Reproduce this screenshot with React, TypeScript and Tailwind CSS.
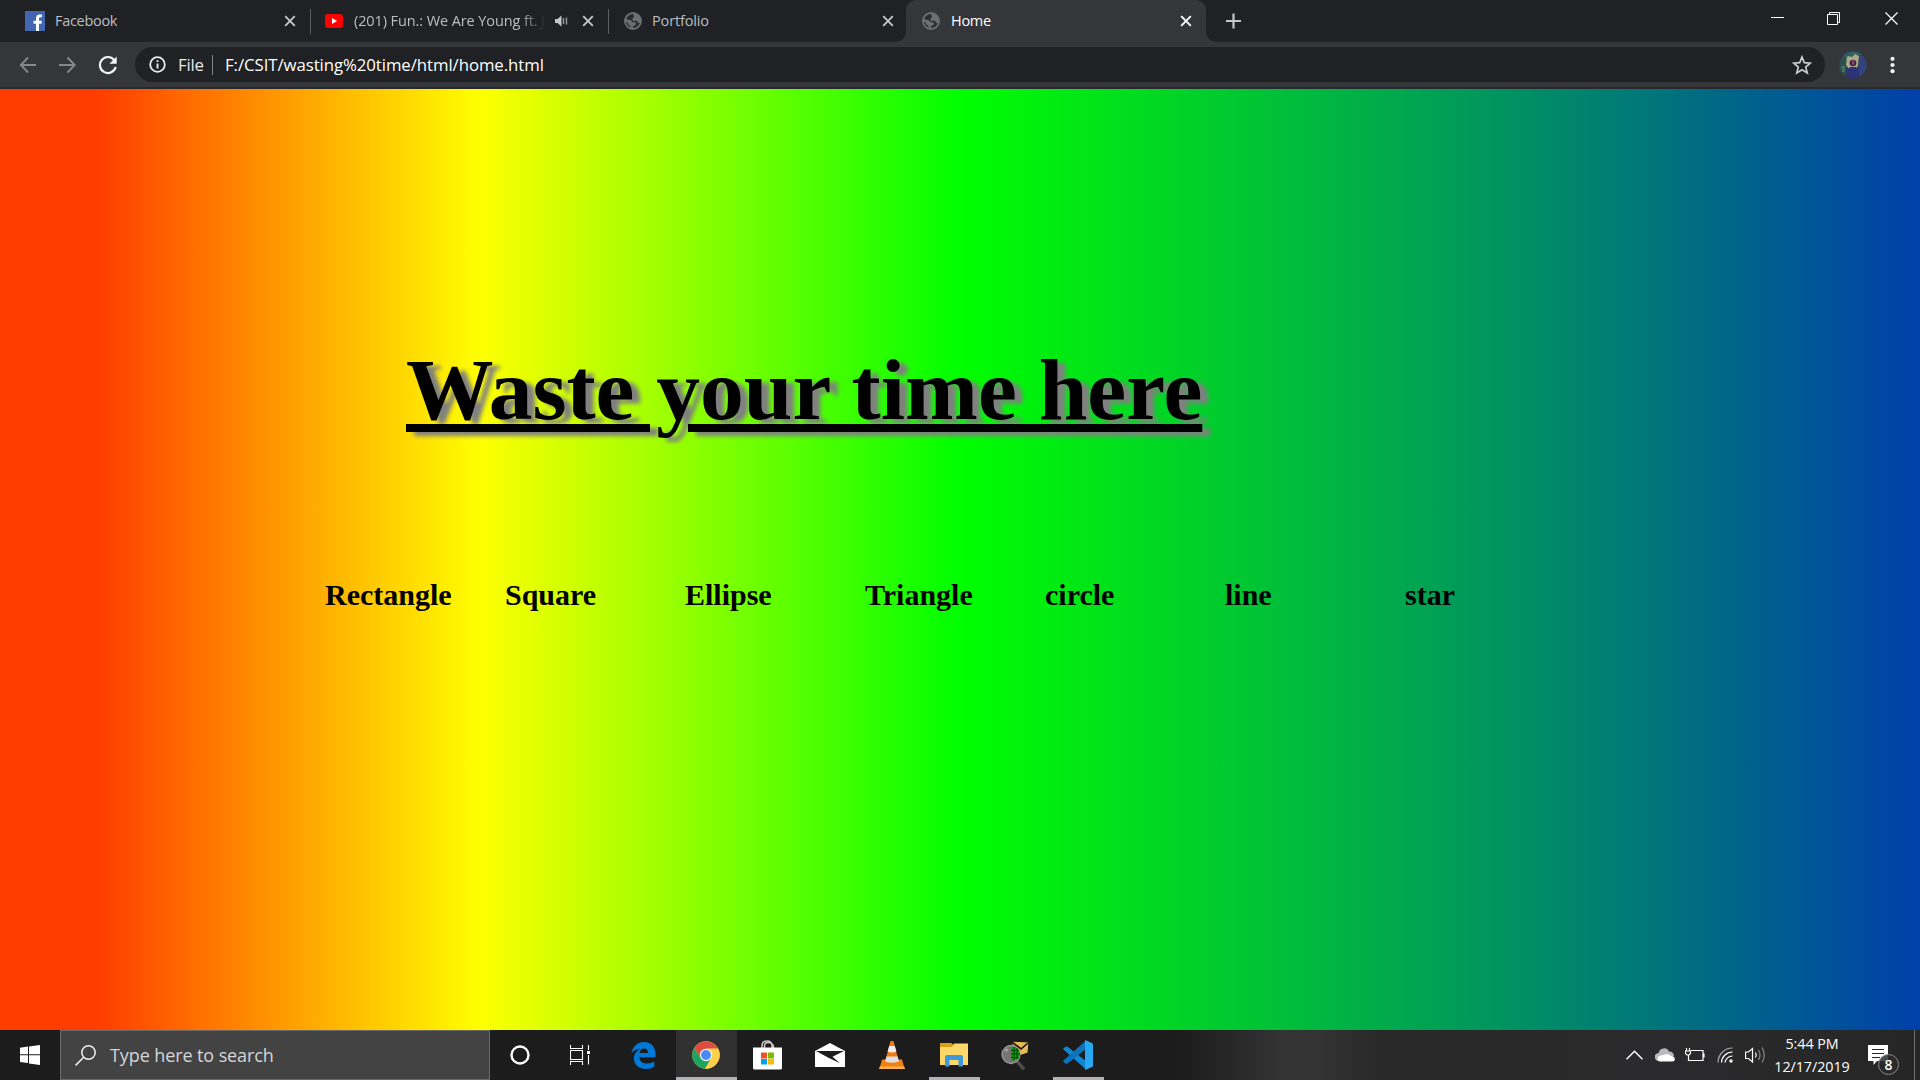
import React from "react";

function CloseIcon({ color }: { color: string }) {
  return (
    <svg width="12" height="12" viewBox="0 0 12 12" className="shrink-0">
      <path d="M1.2 1.2l9.6 9.6M10.8 1.2l-9.6 9.6" stroke={color} strokeWidth="1.9" fill="none" />
    </svg>
  );
}

function Globe() {
  return (
    <svg width="18" height="18" viewBox="0 0 18 18" className="shrink-0">
      <circle cx="9" cy="9" r="8" fill="#2a2c2f" stroke="#6b6f73" strokeWidth="1.9" />
      <path d="M9 1l4 1.2 3.4 4 .3 4.6-2.5.2-1.2-2.2-3.6.1-1.2-2.2L10 5z" fill="#6b6f73" />
      <path d="M1 6.5l3.5 1.2 2.2.2 2 2.2 3.4.6-.6 2.5-2.2.6-.4 2.6-2.6.6.2-3-2.6-1.8-.2-1.6L1 10z" fill="#6b6f73" />
    </svg>
  );
}

function TabStrip() {
  return (
    <div className="flex h-[42px] bg-[#202124] text-[14.5px] text-[#b9bec3]">
      <div className="flex w-[310px] items-center pl-[25px] pr-[14px]">
        <svg width="20" height="20" viewBox="0 0 20 20" className="shrink-0">
          <rect width="20" height="20" fill="#4267b2" />
          <path d="M11 20v-7.3H8.5V9.8H11V7.6C11 5 12.500 3.6 14.800 3.600c1 0 1.900.1 2.100.1v2.500h-1.400c-1.200 0-1.500.6-1.500 1.500v2.100h2.800l-.4 2.900H14V20z" fill="#fff" />
        </svg>
        <span className="ml-[10px] flex-1 tracking-[-0.3px]">Facebook</span>
        <CloseIcon color="#c4c7ca" />
      </div>
      <div className="flex w-[299px] items-center pr-[15px]">
        <div className="h-[25px] w-px bg-[#5c5e62]" />
        <svg width="18" height="14" viewBox="0 0 18 14" className="ml-[14px] shrink-0">
          <rect width="18" height="14" rx="3" fill="#f00" />
          <path d="M7 4l5 3-5 3z" fill="#fff" />
        </svg>
        <div className="ml-[11px] w-[192px] shrink-0 whitespace-nowrap tracking-[-0.1px] [mask-image:linear-gradient(to_right,#000_86%,transparent)]">
          (201) Fun.: We Are Young ft. J
        </div>
        <svg width="13" height="12" viewBox="0 0 13 12" className="ml-[9px] shrink-0">
          <path d="M0 4h2.500L6.500.5v11L2.500 8H0z" fill="#c4c7ca" />
          <path d="M8.500 3v6M11.500 2.500v7" stroke="#8f9397" strokeWidth="1.500" />
        </svg>
        <div className="ml-auto flex">
          <CloseIcon color="#c4c7ca" />
        </div>
      </div>
      <div className="flex w-[297px] items-center pr-[12px]">
        <div className="-ml-px h-[25px] w-px bg-[#5c5e62]" />
        <div className="ml-[15px] flex">
          <Globe />
        </div>
        <span className="ml-[10px] flex-1 tracking-[-0.15px]">Portfolio</span>
        <CloseIcon color="#c4c7ca" />
      </div>
      <div className="relative flex w-[300px] items-center rounded-t-[10px] bg-[#35363a] pl-[16px] pr-[14px] text-white">
        <div className="absolute bottom-0 -left-[10px] size-[10px] bg-[radial-gradient(circle_at_0_0,transparent_9.500px,#35363a_10px)]" />
        <div className="absolute bottom-0 -right-[10px] size-[10px] bg-[radial-gradient(circle_at_100%_0,transparent_9.500px,#35363a_10px)]" />
        <Globe />
        <span className="ml-[11px] flex-1 tracking-[-0.3px]">Home</span>
        <CloseIcon color="#fff" />
      </div>
      <svg width="16" height="16" viewBox="0 0 16 16" className="ml-[20px] mt-[13px]">
        <path d="M7.500.5v15M0 8h15" stroke="#c4c7ca" strokeWidth="2.200" />
      </svg>
      <div className="ml-auto flex pr-[21px] pt-[11px]">
        <svg width="128" height="15" viewBox="0 0 128 15" fill="none" stroke="#fff">
          <path d="M0 6.500h13" />
          <path d="M56.500 3.500h10v10h-10zM58.500 3.500v-2h10v10h-2" strokeWidth="1" />
          <path d="M114.500 1.500l12 12M126.500 1.500l-12 12" strokeWidth="1.200" />
        </svg>
      </div>
    </div>
  );
}

function Toolbar() {
  return (
    <div className="flex h-[47px] items-center border-b-2 border-[#28292c] bg-[#35363a] pl-[19px] pr-[20px]">
      <svg width="18" height="18" viewBox="0 0 18 18" fill="none" stroke="#85888c" strokeWidth="1.900">
        <path d="M17 9H2M9 1.500L1.800 9 9 16.500" />
      </svg>
      <svg width="18" height="18" viewBox="0 0 18 18" fill="none" stroke="#85888c" strokeWidth="1.900" className="ml-[22px]">
        <path d="M0 9h15M8.500 1.500L15.700 9 8.500 16.500" />
      </svg>
      <svg width="20" height="20" viewBox="0 0 20 20" className="ml-[21px]">
        <path d="M16.200 5A8 8 0 1 0 17.700 12" fill="none" stroke="#f1f3f4" strokeWidth="2.200" />
        <path d="M18.700 1.500v7.300h-7.300z" fill="#f1f3f4" />
      </svg>
      <div className="ml-[17px] flex h-[35px] w-[1690px] items-center rounded-full bg-[#202124] pl-[14px] pr-[13px]">
        <svg width="17" height="17" viewBox="0 0 17 17">
          <circle cx="8.500" cy="8.500" r="7.300" fill="none" stroke="#e8eaed" strokeWidth="1.800" />
          <path d="M8.500 7.500v5M8.500 4.200v1.900" stroke="#e8eaed" strokeWidth="1.900" />
        </svg>
        <span className="ml-[12px] w-[34px] pt-px text-[16.800px] tracking-[-0.2px] text-[#e8eaed]">File</span>
        <div className="h-[20px] w-px bg-[#7f8286]" />
        <span className="ml-[12px] pt-px text-[16.800px] tracking-[-0.07px] text-white">F:/CSIT/wasting%20time/html/home.html</span>
        <svg width="20" height="20" viewBox="0 0 20 20" className="ml-auto">
          <path d="M10 2l2.300 5.600 6 .5-4.600 3.900 1.500 5.900L10 14.700l-5.200 3.200L6.300 12 1.700 8.100l6-.5z" fill="none" stroke="#c9ccd0" strokeWidth="1.700" />
        </svg>
      </div>
      <svg width="28" height="28" viewBox="0 0 28 28" className="ml-[14px] shrink-0">
        <defs>
          <clipPath id="avatar">
            <circle cx="14" cy="14" r="13.600" />
          </clipPath>
          <filter id="soft">
            <feGaussianBlur stdDeviation="0.6" />
          </filter>
        </defs>
        <g clipPath="url(#avatar)">
          <rect width="28" height="28" fill="#2b3a5c" />
          <g filter="url(#soft)">
            <path d="M0 4h9l-1 9-2 12H0z" fill="#2d504e" />
            <path d="M8 4h4l3-2 5 3-1 10-2 3h-7l-3-4z" fill="#a9a984" />
            <path d="M4 0h19v4l-3 1-4-2-3 3-4-1-3 3z" fill="#335f63" />
            <path d="M20 5h8v22h-8z" fill="#33437a" />
            <path d="M8 28v-9l3-3h6l3 3v9z" fill="#2b3278" />
            <circle cx="14" cy="12" r="3.300" fill="#39284f" />
            <path d="M13 9.500h2.200v4H13z" fill="#a8386a" />
            <path d="M2 15h4v6H3z" fill="#42705a" />
          </g>
        </g>
      </svg>
      <svg width="5" height="18" viewBox="0 0 5 18" className="ml-auto mr-[5px]" fill="#f1f3f4">
        <circle cx="2.500" cy="2.800" r="2.100" />
        <circle cx="2.500" cy="9" r="2.100" />
        <circle cx="2.500" cy="15.200" r="2.100" />
      </svg>
    </div>
  );
}

const shapes = ["Rectangle", "Square", "Ellipse", "Triangle", "circle", "line", "star"];

function Page() {
  return (
    <main className="h-[941px] bg-[linear-gradient(to_right,#ff3c00_5%,#ffff00_25%,#00ff00_50%,#0040aa_100%)] font-['Liberation_Serif',serif] font-bold text-black">
      <h1 className="ml-[406px] pt-[251px] text-[87.500px] leading-[100px] whitespace-nowrap underline [text-shadow:8px_4px_4px_gray]">
        Waste your time here
      </h1>
      <ul className="ml-[325px] mt-[135px] flex text-[30px] leading-[40px]">
        {shapes.map((s) => (
          <li key={s} className="w-[180px]">
            {s}
          </li>
        ))}
      </ul>
    </main>
  );
}

function Taskbar() {
  return (
    <footer className="flex h-[50px] items-center bg-[linear-gradient(to_right,#1c1c1c_1180px,#333_1280px,#333_1320px,#292929_1380px,#292929_1550px,#2b2b2d_1640px,#262626_1920px)]">
      <svg width="20" height="20" viewBox="0 0 20 20" fill="#fff" className="ml-[20px]">
        <path d="M0 2.700l8-1.100v7.700H0zM9 1.400L20 0v9.300H9zM0 10.300h8v7.700l-8-1.100zM9 10.300h11V20L9 18.400z" />
      </svg>
      <div className="ml-[20px] flex h-[50px] w-[430px] items-center border border-[#6a6a6a] bg-[#434343] pl-[14px]">
        <svg width="21" height="21" viewBox="0 0 21 21" fill="none" stroke="#f0f0f0" strokeWidth="1.500">
          <circle cx="13.500" cy="7.500" r="6.700" />
          <path d="M8.700 12.300L.6 20.400" />
        </svg>
        <span className="ml-[14px] text-[18px] tracking-[-0.1px] text-[#d4d6d8]">Type here to search</span>
      </div>
      <svg width="20" height="20" viewBox="0 0 20 20" className="ml-[20px]">
        <circle cx="10" cy="10" r="8.500" fill="none" stroke="#fff" strokeWidth="2.400" />
      </svg>
      <svg width="20" height="20" viewBox="0 0 20 20" className="ml-[40px]" fill="none" stroke="#fff" strokeWidth="1.100">
        <path d="M.5 0v3.500h12V0M.5 20v-3.500h12V20M.5 5.500h12v9h-12zM18.500 0v5M18.500 10v9.500" />
        <path d="M17 6h3v3h-3z" fill="#fff" stroke="none" />
      </svg>
      <svg width="25" height="27" viewBox="0 0 25 27" className="ml-[41px]">
        <path d="M.5 11.500C1.500 4.500 6.500 0 13 0c7.500 0 11.500 5.500 11.500 12v3.200H8.300c.2 4.300 3.900 6.300 8 6.300 2.500 0 5-.8 7-2v5.300c-2.500 1.500-5.500 2.200-8.600 2.200C7.500 27 3 22.600 3 16.600c0-4.800 2.700-8.200 6.700-10.100C5.800 6.700 2.300 8.700.5 11.500zM8.500 11h8.600c0-2.800-1.500-4.600-4.100-4.600S8.900 8.300 8.500 11z" fill="#0078d7" />
      </svg>
      <div className="ml-[20px] flex h-[50px] w-[61px] flex-col border-b-[3px] border-[#b5b0b3] bg-[#303030] pl-[16px]">
        <svg width="28" height="28" viewBox="-14 -14 28 28" className="mt-[11px]">
          <circle r="13.700" fill="#fdd04b" />
          <path d="M-11.900-6.900A13.700 13.700 0 0 1 11.900-6.500L0-6.200-5.400 3.100z" fill="#dd4c40" />
          <path d="M-11.900-6.900A13.700 13.700 0 0 0-1 13.700L5.500 3.100-5.400 3.100z" fill="#1da362" />
          <path d="M0-6.200H12.200A13.700 13.700 0 0 1-1 13.700L5.400 3.100z" fill="#fdd04b" />
          <circle r="6.200" fill="#f3f3f3" />
          <circle r="4.900" fill="#4a8af4" />
        </svg>
      </div>
      <svg width="29" height="30" viewBox="0 0 29 30" className="ml-[16px]">
        <path d="M9 9V6c0-3.200 2-5 5-5s5 1.800 5 5v3M11.500 9V6c0-2 1.200-3.500 3.500-3.500S20.500 4 20.500 6.500V9" fill="none" stroke="#c8c8c8" strokeWidth="1.500" />
        <path d="M0 7.500h29V28q0 1.500-1.500 1.500h-26Q0 29.500 0 28z" fill="#fff" />
        <path d="M8 12.500h6v6H8z" fill="#f25022" />
        <path d="M15 12.500h6v6h-6z" fill="#7fba00" />
        <path d="M8 19h6v5.500H8z" fill="#00a4ef" />
        <path d="M15 19h6v5.500h-6z" fill="#ffb900" />
      </svg>
      <svg width="30" height="24" viewBox="0 0 30 24" className="ml-[33px]">
        <path d="M0 8L15 0l15 8v16H0z" fill="#fff" />
        <path d="M1 8h28l-11.500 5.800 7.500 6.500L14 15z" fill="#1c1c1c" />
      </svg>
      <svg width="26" height="28" viewBox="0 0 26 28" className="ml-[34px]">
        <path d="M3 18.500h20l2.700 9.500H.3z" fill="#f08010" />
        <path d="M.8 25.500h24.400L26 28H0z" fill="#fbb050" />
        <path d="M11.500 0h3l5.500 21q-7 3.500-14 0z" fill="#f27a12" />
        <path d="M10.200 5h5.600l1.600 5.500q-4.400 1.800-8.800 0z" fill="#eee" />
        <path d="M7.400 15.500h11.200L20 20.500q-7 2.500-14 0z" fill="#dedede" />
      </svg>
      <div className="ml-[24px] flex h-[50px] w-[51px] flex-col border-b-[3px] border-[#b5b0b3] pl-[11px]">
        <svg width="28" height="24" viewBox="0 0 28 24" className="mt-[13px]">
          <path d="M0 0h11.500l2 2v3H0z" fill="#d9a014" />
          <path d="M0 4h12l2-3.500h14V22H0z" fill="#ffd869" />
          <path d="M5 23.500V14q0-2 2-2h14q2 0 2 2v9.500h-4.500V17h-9v6.500z" fill="#3f97dc" />
        </svg>
      </div>
      <svg width="29" height="30" viewBox="0 0 29 30" className="ml-[21px]">
        <path d="M10 1l18 1-1 11-12 4z" fill="#e5b956" stroke="#111" strokeWidth="1" />
        <path d="M11 2l9 7 7-6" fill="none" stroke="#111" strokeWidth="1.600" />
        <path d="M16 21l7 8.500" stroke="#4c4c4c" strokeWidth="3.500" />
        <circle cx="10" cy="14.500" r="9" fill="#777472" stroke="#999" strokeWidth="1.300" />
        <path d="M10 6.500q8 0 9 8-1 6-9 6z" fill="#05a50d" />
        <path d="M13 7v13M16 8v11M10 10.500h8M10 14h9M10 17.500h8" stroke="#053d08" strokeWidth="1" />
        <circle cx="5.500" cy="10" r="1.500" fill="#aaa" />
      </svg>
      <div className="ml-[23px] flex h-[50px] w-[51px] flex-col border-b-[3px] border-[#b5b0b3] pl-[10px]">
        <svg width="30" height="30" viewBox="0 0 30 30" className="mt-[10px]">
          <path d="M.7 9.700q-.9-.9 0-1.700L2.800 6.700q.9-.5 1.700.1L23 21v8.500z" fill="#0f87d2" />
          <path d="M.7 20.300q-.9.900 0 1.700l2.100 1.700q.9.500 1.700-.1L23 9V.500z" fill="#0a74bd" />
          <path d="M22 0l7 3q1 .5 1 1.500v21q0 1-1 1.500l-7 3z" fill="#27a9f2" />
        </svg>
      </div>
      <div className="ml-auto flex h-[50px] items-center">
        <svg width="17" height="10" viewBox="0 0 17 10" fill="none" stroke="#fff" strokeWidth="1.500">
          <path d="M.5 9.200l8-8 8 8" />
        </svg>
        <svg width="20" height="14" viewBox="0 0 20 14" className="ml-[12px]">
          <path d="M4 13a4 4 0 0 1-.4-8A5.500 5.500 0 0 1 14 3.500 4.500 4.500 0 0 1 19 8z" fill="#b9b9b9" />
          <path d="M4.500 13.500a3 3 0 0 1-.5-5.500l8-2q3 1 4 2 3.500 0 3.800 3 0 2.500-2.500 2.500z" fill="#fff" />
        </svg>
        <svg width="20" height="14" viewBox="0 0 20 14" className="ml-[10px]" fill="none" stroke="#fff" strokeWidth="1.200">
          <path d="M6 2.500h12v10H4M19 5.500v4M1.500 0v3M4.500 0v3M.5 3h5v2.500L4 7H2L.5 5.500zM3.500 7v6" />
        </svg>
        <svg width="17" height="17" viewBox="0 0 17 17" className="ml-[12px]" fill="none" stroke="#fff" strokeWidth="1.200">
          <path d="M1 15.500A14.500 14.500 0 0 1 15.500 1" stroke="#aaa" />
          <path d="M4.500 15.500A11 11 0 0 1 15.500 5M8 15.500A7.500 7.500 0 0 1 15.500 9" />
          <circle cx="14" cy="14" r="1.700" fill="#fff" stroke="none" />
        </svg>
        <svg width="21" height="18" viewBox="0 0 21 18" className="ml-[11px]" fill="none" stroke="#fff" strokeWidth="1.200">
          <path d="M.6 6v6.500h2.900l4 3.500V2.500l-4 3.500z" />
          <path d="M10.500 6.500q1.500 2.500 0 5" />
          <path d="M13.500 4q3 5 0 10M17 1.500q4.500 7.500 0 15" stroke="#888" />
        </svg>
        <div className="ml-[8px] w-[76px] text-center text-[14.300px] leading-[23px] whitespace-nowrap tracking-[-0.050px] text-white">
          <div>5:44 PM</div>
          <div>12/17/2019</div>
        </div>
        <div className="relative ml-[18px] h-[50px] w-[46px]">
          <svg width="30" height="32" viewBox="0 0 30 32" className="mt-[15px]">
            <path d="M0 0h20v16H9l-3.500 4v-4H0z" fill="#fff" />
            <path d="M4 4.500h12M4 8.500h12M4 12.500h8" stroke="#262626" strokeWidth="1.200" />
          </svg>
          <div className="absolute left-[10px] top-[24px] flex size-[21px] items-center justify-center rounded-full border border-[#8a8a8a] bg-[#2b2b2bd9] text-[14px] font-semibold text-white">
            8
          </div>
        </div>
        <div className="mr-[5px] h-[50px] w-px bg-[#707070]" />
      </div>
    </footer>
  );
}

export default function App() {
  return (
    <div className="h-[1080px] w-[1920px] overflow-hidden font-['Open_Sans','Noto_Sans',sans-serif]">
      <TabStrip />
      <Toolbar />
      <Page />
      <Taskbar />
    </div>
  );
}
